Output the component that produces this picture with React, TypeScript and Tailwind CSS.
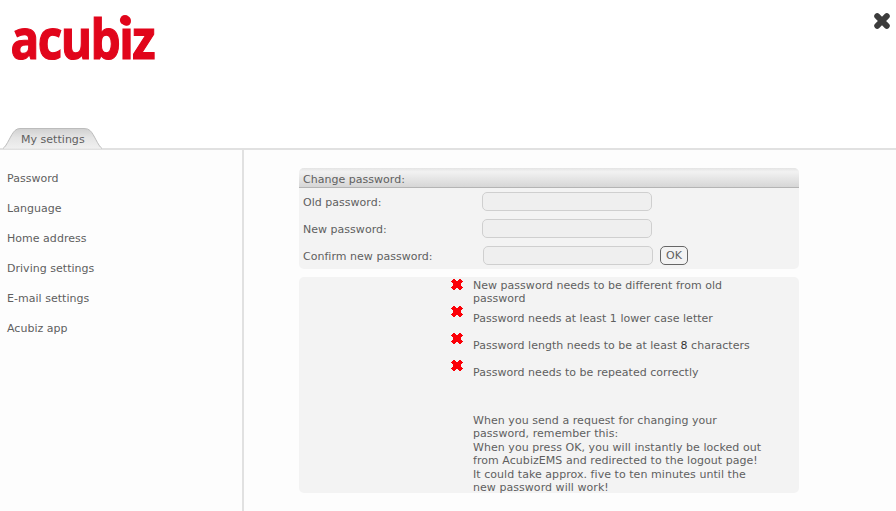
import type { ReactNode } from "react";

const menuItems = [
  "Password",
  "Language",
  "Home address",
  "Driving settings",
  "E-mail settings",
  "Acubiz app",
];

function Logo() {
  return (
    <svg width="240" height="90" viewBox="0 0 240 90" role="img" fill="#e1051b">
      <text
        x="10.5"
        y="59.2"
        stroke="#e1051b"
        strokeWidth="1.2"
        fontSize="55"
        textLength="143.5"
        lengthAdjust="spacingAndGlyphs"
        className="font-['Open_Sans',sans-serif] font-bold tracking-[-1.8px]"
      >
        acubiz
      </text>
      <circle cx="125" cy="20" r="5.1" />
    </svg>
  );
}

function CloseIcon() {
  return (
    <svg width="16" height="16" viewBox="0 0 16 16">
      <path
        d="M3.2 3.2l9.6 9.6M12.8 3.2l-9.6 9.6"
        stroke="#3c3c3c"
        strokeWidth="5.9"
        strokeLinecap="round"
      />
    </svg>
  );
}

function ErrorIcon() {
  return (
    <svg
      width="12"
      height="11"
      viewBox="0 0 12 11"
      fill="#fb0007"
      shapeRendering="crispEdges"
    >
      <path d="M2 0h2v1h1v1h2v-1h1v-1h2v1h1v1h1v1h-1v1h-1v1h-1v1h1v1h1v1h1v1h-1v1h-1v1h-2v-1h-1v-1h-2v1h-1v1h-2v-1h-1v-1h-1v-1h1v-1h1v-1h1v-1h-1v-1h-1v-1h-1v-1h1v-1h1z" />
      <path d="M2 3h8v5h-8z" />
    </svg>
  );
}

function Tab({ label }: { label: string }) {
  return (
    <div className="relative ml-[2px] h-[21px] w-[102px]">
      <svg width="102" height="21" viewBox="0 0 102 21" className="absolute">
        <defs>
          <linearGradient id="tab" x1="0" y1="0" x2="0" y2="1">
            <stop offset="0" stopColor="#d0d0d0" />
            <stop offset="0.45" stopColor="#e4e4e4" />
            <stop offset="1" stopColor="#f0f0f0" />
          </linearGradient>
        </defs>
        <path
          d="M1 20.5C5 18 9 6 13 2.5Q15 .5 18 .5H82Q86 .5 88 2.5C92 6 96 18 100 20.5"
          fill="url(#tab)"
          stroke="#bcbcbc"
        />
      </svg>
      <span className="relative block pl-[19px] leading-[24px]">{label}</span>
    </div>
  );
}

function Field({ label, children }: { label: string; children: ReactNode }) {
  return (
    <div className="flex h-[27px] items-center">
      <label className="w-[179px] pt-[2px] pl-1">{label}</label>
      {children}
    </div>
  );
}

const inputClass =
  "h-[19px] w-[170px] rounded-[5px] border border-[#cfcfcf] bg-[#efefef] outline-none";

function Rule({ children }: { children: ReactNode }) {
  return (
    <li className="flex h-[27px]">
      <div className="w-[22px] shrink-0 pt-[2px]">
        <ErrorIcon />
      </div>
      {children}
    </li>
  );
}

export default function App() {
  return (
    <div className="flex h-[511px] w-[896px] flex-col overflow-hidden bg-[#fdfdfd] font-['DejaVu_Sans',sans-serif] text-[11px] leading-[13px] tracking-[0.025px] text-[#5f5f5f]">
      <header className="flex h-[128px] justify-between bg-white">
        <Logo />
        <button className="mt-[13px] mr-[6px] h-4 w-4">
          <CloseIcon />
        </button>
      </header>
      <div className="h-[22px] border-b-2 border-[#e1e1e1] bg-white">
        <Tab label="My settings" />
      </div>

      <div className="flex grow">
        <nav className="w-[244px] border-r-2 border-[#e1e1e1] pt-[14px] pl-[7px]">
          {menuItems.map((item) => (
            <a key={item} className="block h-[30px] leading-[30px]">
              {item}
            </a>
          ))}
        </nav>

        <main className="pt-[18px] pl-[55px]">
          <section className="h-[101px] w-[500px] overflow-hidden rounded-[5px] bg-[#f3f3f3]">
            <h2 className="h-[20px] border-b border-[#b4b4b4] bg-linear-to-b from-[#e4e4e4] via-[#f2f2f2] via-20% to-[#d6d6d6] pl-1 leading-[24px]">
              Change password:
            </h2>
            <Field label="Old password:">
              <input type="password" className={`ml-1 ${inputClass}`} />
            </Field>
            <Field label="New password:">
              <input type="password" className={`ml-1 ${inputClass}`} />
            </Field>
            <Field label="Confirm new password:">
              <input type="password" className={`ml-[5px] ${inputClass}`} />
              <button className="ml-[7px] h-[19px] w-[28px] rounded-[5px] border border-[#666] leading-[17px]">
                OK
              </button>
            </Field>
          </section>

          <section className="mt-2 h-[216px] w-[500px] overflow-hidden rounded-[5px] bg-[#f3f3f3] pl-[152px]">
            <ul>
              <Rule>
                <p className="w-[280px] pt-[2px]">
                  New password needs to be different from old
                  <br />
                  password
                </p>
              </Rule>
              <Rule>
                <p className="pt-[8px]">
                  Password needs at least 1 lower case letter
                </p>
              </Rule>
              <Rule>
                <p className="pt-[8px]">
                  Password length needs to be at least{" "}
                  <span className="text-[#333]">8</span> characters
                </p>
              </Rule>
              <Rule>
                <p className="pt-[8px]">Password needs to be repeated correctly</p>
              </Rule>
            </ul>
            <div className="mt-[29px] pl-[22px] leading-[13.4px] tracking-[0.05px] whitespace-nowrap">
              When you send a request for changing your
              <br />
              password, remember this:
              <br />
              When you press OK, you will instantly be locked out
              <br />
              from AcubizEMS and redirected to the logout page!
              <br />
              It could take approx. five to ten minutes until the
              <br />
              new password will work!
            </div>
          </section>
        </main>
      </div>
    </div>
  );
}
